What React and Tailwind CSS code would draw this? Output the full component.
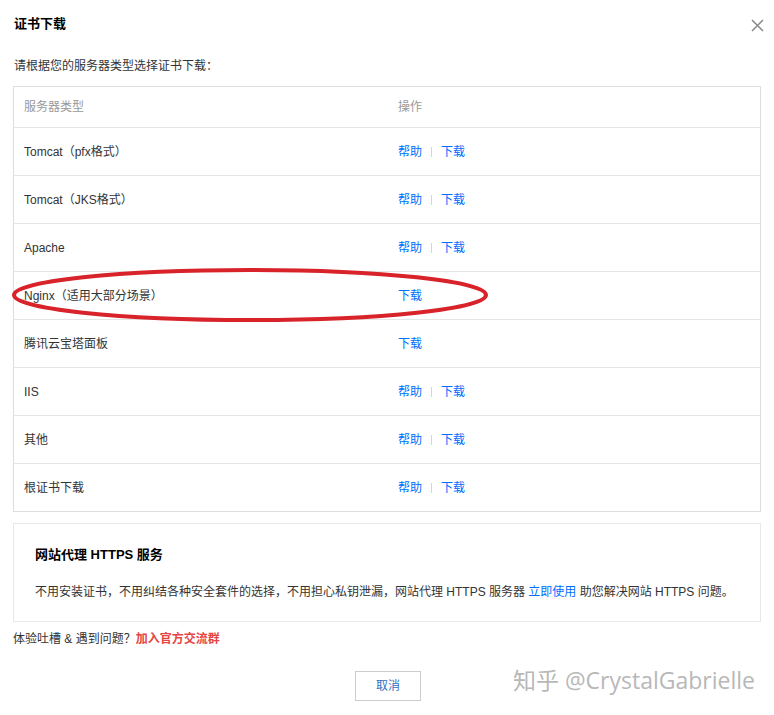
import React from 'react';

const rows = [
  { name: 'Tomcat（pfx格式）', help: true },
  { name: 'Tomcat（JKS格式）', help: true },
  { name: 'Apache', help: true },
  { name: 'Nginx（适用大部分场景）', help: false },
  { name: '腾讯云宝塔面板', help: false },
  { name: 'IIS', help: true },
  { name: '其他', help: true },
  { name: '根证书下载', help: true },
];

const App = () => {
  return (
    <div
      className="relative w-[774px] h-[715px] bg-white text-[12px] text-[#333] overflow-hidden"
      style={{ fontFamily: '"Liberation Sans", "Noto Sans CJK SC", sans-serif' }}
    >
      <div className="flex items-center justify-between pl-[14px] pr-[10px] pt-[12px] h-[36px]">
        <h1 className="text-[13px] font-bold text-black">证书下载</h1>
        <svg width="13" height="13" viewBox="0 0 13 13" className="mt-[2px]">
          <path d="M1 1L12 12M12 1L1 12" stroke="#888" strokeWidth="1.5" />
        </svg>
      </div>

      <div className="px-[13px]">
        <p className="mt-[22px] pl-[1px] leading-[16px]">请根据您的服务器类型选择证书下载：</p>

        <div className="mt-[12px] border border-[#ddd]">
          <div className="flex h-[40px] items-center text-[#999]">
            <div className="w-[384px] pl-[10px]">服务器类型</div>
            <div>操作</div>
          </div>
          {rows.map((r) => (
            <div key={r.name} className="flex h-[48px] items-center border-t border-[#e5e5e5]">
              <div className="w-[384px] pl-[10px]">{r.name}</div>
              <div className="flex items-center text-[#006eff]">
                {r.help && (
                  <>
                    <span>帮助</span>
                    <span className="mx-[9px] h-[10px] w-px bg-[#e6cfd3]" />
                  </>
                )}
                <span>下载</span>
              </div>
            </div>
          ))}
        </div>

        <div className="mt-[11px] h-[99px] border border-[#e8e8e8] pl-[21px] pt-[22px]">
          <h2 className="text-[13px] font-bold text-black leading-[18px]">网站代理 HTTPS 服务</h2>
          <p className="mt-[20px] leading-[16px]">
            不用安装证书，不用纠结各种安全套件的选择，不用担心私钥泄漏，网站代理 HTTPS 服务器{' '}
            <span className="text-[#006eff]">立即使用</span> 助您解决网站 HTTPS 问题。
          </p>
        </div>

        <p className="mt-[9px] leading-[16px]">
          体验吐槽 &amp; 遇到问题？<span className="font-bold text-[#e54545]">加入官方交流群</span>
        </p>

        <div className="mt-[24px] flex justify-center pl-[2px]">
          <button className="h-[30px] w-[66px] border border-[#ccc] text-[#2f6fbf] bg-white">取消</button>
        </div>
      </div>

      <svg className="absolute left-0 top-0 pointer-events-none" width="774" height="715">
        <ellipse cx="250" cy="295" rx="236" ry="25" fill="none" stroke="#d8232a" strokeWidth="4" />
      </svg>

      <div
        className="absolute left-[513px] top-[665px] text-[23px] leading-[30px] text-[#b8b8b8]"
        style={{ fontFamily: '"Open Sans", "Noto Sans CJK SC", sans-serif', textShadow: '0 0 2px #fff, 0 0 1px #fff' }}
      >
        知乎 @CrystalGabrielle
      </div>
    </div>
  );
};

export default App;
